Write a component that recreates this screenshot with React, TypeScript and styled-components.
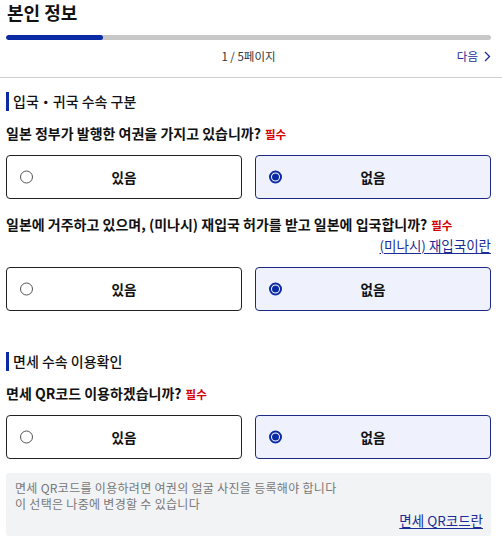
import React from "react";
import styled, { createGlobalStyle } from "styled-components";

const Global = createGlobalStyle`
  html, body { margin: 0; padding: 0; background: #fff; }
  body {
    font-family: "Noto Sans CJK KR", "Noto Sans", sans-serif;
    color: #111;
    -webkit-font-smoothing: antialiased;
  }
`;

const BLUE = "#0b2aa6";
const LINK = "#1b2c96";

const Header = styled.header`
  padding: 0 11px 13px 6px;
  border-bottom: 1px solid #cfcfcf;
`;

const Title = styled.h1`
  margin: 0;
  padding-left: 1px;
  font-size: 18px;
  line-height: 24px;
  font-weight: 700;
  color: #111;
`;

const Track = styled.div`
  margin-top: 11px;
  height: 5px;
  border-radius: 3px;
  background: #c8c8c8;
  overflow: hidden;
`;

const Fill = styled.div`
  height: 100%;
  border-radius: 3px;
  background: ${BLUE};
`;

const PageRow = styled.div`
  margin-top: 8px;
  height: 16px;
  display: grid;
  grid-template-columns: 1fr auto 1fr;
  align-items: center;
  font-size: 11.5px;
  line-height: 16px;
`;

const PageNum = styled.span`
  grid-column: 2;
  color: #333;
`;

const NextLink = styled.a`
  grid-column: 3;
  justify-self: end;
  display: flex;
  align-items: center;
  gap: 6px;
  color: ${LINK};
  text-decoration: none;
`;

const Main = styled.main`
  padding: 0 11px 0 6px;
`;

const Section = styled.section<{ $top: number }>`
  margin-top: ${(p) => p.$top}px;
`;

const SectionHeading = styled.h2`
  margin: 0 0 13px;
  height: 19px;
  border-left: 3px solid ${BLUE};
  padding-left: 4px;
  font-size: 14px;
  line-height: 19px;
  font-weight: 500;
  color: #111;
`;

const Question = styled.p<{ $top?: number }>`
  margin: ${(p) => p.$top ?? 0}px 0 0;
  height: 18px;
  font-size: 14px;
  line-height: 18px;
  font-weight: 700;
  color: #111;
  white-space: nowrap;
`;

const Required = styled.span`
  margin-left: 4px;
  font-size: 11.5px;
  line-height: 1;
  font-weight: 700;
  color: #d40000;
`;

const LinkRow = styled.div`
  margin-top: 4px;
  height: 16px;
  display: flex;
  justify-content: flex-end;
  font-size: 13.5px;
  line-height: 16px;
`;

const TextLink = styled.a`
  color: ${LINK};
  text-decoration: underline;
  text-underline-offset: 2px;
`;

const Options = styled.div<{ $top: number }>`
  margin-top: ${(p) => p.$top}px;
  display: grid;
  grid-template-columns: 1fr 1fr;
  gap: 13px;
`;

const Option = styled.label<{ $selected: boolean }>`
  position: relative;
  height: 44px;
  box-sizing: border-box;
  display: flex;
  align-items: center;
  justify-content: center;
  border: 1px solid ${(p) => (p.$selected ? "#1b2a86" : "#222")};
  border-radius: 4px;
  background: ${(p) => (p.$selected ? "#eff2fc" : "#fff")};
  font-size: 13.5px;
  font-weight: 700;
  color: #111;
`;

const Radio = styled.span<{ $selected: boolean }>`
  position: absolute;
  left: 13px;
  top: 50%;
  transform: translateY(-50%);
  width: 13px;
  height: 13px;
  box-sizing: border-box;
  border-radius: 50%;
  border: ${(p) => (p.$selected ? `2px solid ${BLUE}` : "1.5px solid #555")};
  background: #fff;
  display: flex;
  align-items: center;
  justify-content: center;
  &::after {
    content: "";
    display: ${(p) => (p.$selected ? "block" : "none")};
    width: 7px;
    height: 7px;
    border-radius: 50%;
    background: ${BLUE};
  }
`;

const Info = styled.div`
  margin-top: 14px;
  background: #f2f3f5;
  border-radius: 3px;
  padding: 7px 8px 8px 9px;
`;

const InfoText = styled.p`
  margin: 0;
  font-size: 12px;
  line-height: 16px;
  letter-spacing: 0.3px;
  color: #777;
`;

const InfoLink = styled(LinkRow)`
  margin-top: 0;
`;

type Choice = { label: string; selected: boolean };

const YesNo: React.FC<{ top: number }> = ({ top }) => {
  const choices: Choice[] = [
    { label: "있음", selected: false },
    { label: "없음", selected: true },
  ];
  return (
    <Options $top={top}>
      {choices.map((c) => (
        <Option key={c.label} $selected={c.selected}>
          <Radio $selected={c.selected} />
          {c.label}
        </Option>
      ))}
    </Options>
  );
};

const Chevron = () => (
  <svg width="7" height="11" viewBox="0 0 7 11" fill="none">
    <path d="M1 1l4.5 4.5L1 10" stroke={LINK} strokeWidth="1.3" />
  </svg>
);

export default function App() {
  const progress = 20;
  return (
    <>
      <Global />
      <Header>
        <Title>본인 정보</Title>
        <Track>
          <Fill style={{ width: `${progress}%` }} />
        </Track>
        <PageRow>
          <PageNum>1 / 5페이지</PageNum>
          <NextLink href="#">
            다음 <Chevron />
          </NextLink>
        </PageRow>
      </Header>
      <Main>
        <Section $top={14}>
          <SectionHeading>입국・귀국 수속 구분</SectionHeading>
          <Question>
            일본 정부가 발행한 여권을 가지고 있습니까?<Required>필수</Required>
          </Question>
          <YesNo top={13} />
          <Question $top={16}>
            일본에 거주하고 있으며, (미나시) 재입국 허가를 받고 일본에 입국합니까?
            <Required>필수</Required>
          </Question>
          <LinkRow>
            <TextLink href="#">(미나시) 재입국이란</TextLink>
          </LinkRow>
          <YesNo top={14} />
        </Section>
        <Section $top={41}>
          <SectionHeading>면세 수속 이용확인</SectionHeading>
          <Question>
            면세 QR코드 이용하겠습니까?<Required>필수</Required>
          </Question>
          <YesNo top={13} />
          <Info>
            <InfoText>
              면세 QR코드를 이용하려면 여권의 얼굴 사진을 등록해야 합니다
              <br />이 선택은 나중에 변경할 수 있습니다
            </InfoText>
            <InfoLink>
              <TextLink href="#">면세 QR코드란</TextLink>
            </InfoLink>
          </Info>
        </Section>
      </Main>
    </>
  );
}
